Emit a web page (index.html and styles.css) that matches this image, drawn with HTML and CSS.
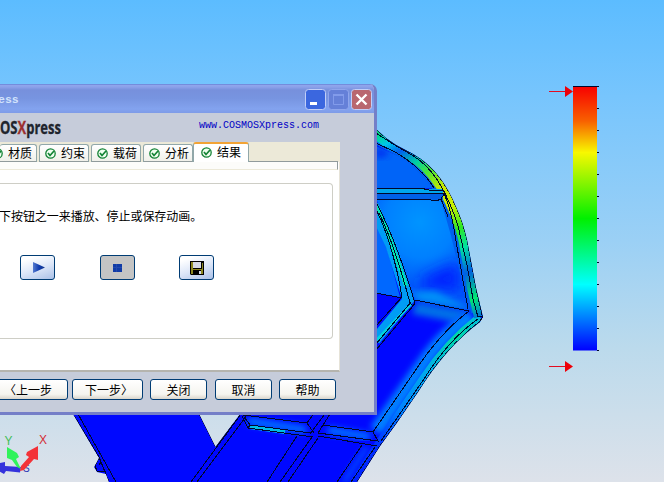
FILE: index.html
```html
<!DOCTYPE html>
<html lang="zh-CN">
<head>
<meta charset="utf-8">
<title>COSMOSXpress</title>
<link rel="stylesheet" href="styles.css">
</head>
<body>
<svg class="scene" width="664" height="482" viewBox="0 0 664 482">
  <defs>
    <linearGradient id="legend" x1="0" y1="0" x2="0" y2="1">
      <stop offset="0" stop-color="#f80000"/><stop offset=".13" stop-color="#f86000"/><stop offset=".25" stop-color="#f8f800"/><stop offset=".5" stop-color="#00f000"/><stop offset=".75" stop-color="#00ffff"/><stop offset="1" stop-color="#0000ff"/>
    </linearGradient>
    <linearGradient id="rim" gradientUnits="userSpaceOnUse" x1="376" y1="130" x2="480" y2="320">
      <stop offset="0" stop-color="#00e060"/><stop offset=".08" stop-color="#00c8e8"/><stop offset=".14" stop-color="#0060f0"/><stop offset=".22" stop-color="#00d0a0"/><stop offset=".29" stop-color="#50e830"/><stop offset=".38" stop-color="#c8e800"/><stop offset=".48" stop-color="#c8f000"/><stop offset=".58" stop-color="#30e820"/><stop offset=".67" stop-color="#00e0a0"/><stop offset=".78" stop-color="#0060e0"/><stop offset=".9" stop-color="#00e870"/><stop offset="1" stop-color="#0060f0"/>
    </linearGradient>
    <linearGradient id="lower" gradientUnits="userSpaceOnUse" x1="482" y1="317" x2="357" y2="482">
      <stop offset="0" stop-color="#00b8e0"/><stop offset=".15" stop-color="#00d8a8"/><stop offset=".35" stop-color="#00b0e8"/><stop offset=".6" stop-color="#0080ff"/><stop offset=".8" stop-color="#0030ff"/><stop offset="1" stop-color="#0020ff"/>
    </linearGradient>
    <radialGradient id="panel" gradientUnits="userSpaceOnUse" cx="420" cy="222" r="64">
      <stop offset="0" stop-color="#0094ff"/><stop offset=".55" stop-color="#0080ff"/><stop offset="1" stop-color="#0058fa"/>
    </radialGradient>
    <filter id="soft" x="-20%" y="-20%" width="140%" height="140%"><feGaussianBlur stdDeviation="3"/></filter>
    <filter id="haze" x="-50%" y="-50%" width="200%" height="200%"><feGaussianBlur stdDeviation="7"/></filter>
    <clipPath id="body"><path d="M370 124L377 130Q386 139 396 145L413 154Q429 163 440 178Q449 190 456 207Q463 222 467 240L476 288L483 317L480 322Q446 347 418 392L396 424L380 446L357 482H109L106 474L97 472L94 467L97 462L99 458L73 414H199L215.500 447L240 414H370Z"/></clipPath>
  </defs>
  <g clip-path="url(#body)">
    <rect class="solid" width="664" height="482"/>
    <path fill="#0064f8" d="M376 146L405 159L424 172L434 188L376 188Z"/>
    <path fill="#0030f0" filter="url(#soft)" d="M376 147L390 152L384 157L376 158Z"/>
    <path fill="url(#panel)" d="M376 198H443L453 215L462 260L470 310L415 300L398 260Z"/>
    <path fill="#0020ff" filter="url(#haze)" d="M422 278L457 262L460 291L422 288Z"/>
    <path fill="#0090f8" filter="url(#soft)" d="M410 292L435 291L463 305L467 309L420 301Z"/>
    <path fill="#0068ff" d="M376 218L388 252L400 297L376 293Z"/>
    <path fill="#0070e8" filter="url(#soft)" d="M416 302L469 311L454 322L412 314Z"/>
    <path class="spread" stroke="#0080ff" stroke-width="14" filter="url(#soft)" d="M472 316Q444 332 421 367L376 431"/>
    <path class="spread" stroke="url(#lower)" stroke-width="8" d="M480 317Q446 344 423 379L374 451L350 489"/>
    <path class="spread" stroke="#0060ee" stroke-width="10" d="M376 139L410 157L430 177L446 200L456 235L468 285L476 312"/>
    <path class="spread" stroke="url(#rim)" stroke-width="10" d="M373 132L390 145L411 156Q426 165 437 181Q447 194 453 209Q460 224 464 243L472 288L479 317"/>
    <path class="spread" stroke="#00a6ed" stroke-width="6" d="M376 191L443 192"/>
    <path class="spread" stroke="#0060e7" stroke-width="6" d="M376 196L443 197"/>
    <path class="spread" stroke="#009cf4" stroke-width="11" d="M372 205L391 245L408 300L375 340"/>
    <path class="spread" stroke="#00e7ae" stroke-width="4" d="M376 204L389 236L406 286"/>
    <path class="spread" stroke="#00d5de" stroke-width="3" d="M411 304L375 342"/>
    <path class="spread" stroke="#0078ff" stroke-width="7" filter="url(#soft)" d="M248 421L306 430M328 430L370 437"/>
    <path class="spread" stroke="#00bee7" stroke-width="4" d="M250 427L285 432"/>
    <path class="spread" stroke="#0050ff" stroke-width="5" filter="url(#soft)" d="M367 447L344 482"/>
    <g class="edges">
      <path d="M377 130Q386 139 396 145L413 154Q429 163 440 178Q449 190 456 207Q463 222 467 240L476 288L482.500 317L479.500 322Q446 347 418 392L396 424L380 446L357 482"/>
      <path d="M376 133L393 144L412 155Q427 164 438 181Q450 200 458 226L467 265L473 299L478 317"/>
      <path d="M376 143L395 152Q421 167 434 188"/>
      <path d="M376 188L420 188L429 190L443 190M376 193H443L445 196M376 199L431 200L436 201L441 199L444 194Q451 208 456 241L468 309M441 199L443 204L448 217"/>
      <path d="M376 209Q394 247 402 297L376 326M376 202Q396 240 415 303L413 306L376 350M379 213Q394 243 410 303L413 306M411 302L376 344"/>
      <path d="M376 293L402 298M415 300L469 311M478 319Q449 339 424 379L381 441M479.500 322L482.500 317L478 316M469 311Q440 333 415 371L373 432"/>
      <path d="M73 414L99 457L109 482M78 414L116 482M99 458L95 466L97 471L106 472M99 465L101 462M199 414L215.500 447M215.500 447L241 414M241 414L191 482M247 415L197 482"/>
      <path d="M242 416L248 428L313 437M245 418L250 425L310 433M250 425L248 428M243 415L307 423L314 433M307 423L313 415M330 414L318 433L378 441L373 432L323 425M318 436L377 446M312 437L280 482M318 438L288 482M297 436L267 482M362 445L337 482M375 447L351 482M325 414L310 434"/>
    </g>
  </g>
  <g>
    <path fill="url(#legend)" d="M573 86.500H597V350.500H573Z"/>
    <path class="edges" d="M573 86.500H599M597 108.500H599M597 130.500H599M597 152.500H599M597 174.500H599M597 196.500H599M597 218.500H599M597 240.500H599M597 262.500H599M597 284.500H599M597 306.500H599M597 328.500H599M597 350.500H599"/>
    <path class="pointer" d="M549 91.500H566M549 366.500H566"/>
    <path fill="#ee0008" d="M565 86L573 91.500L565 97ZM565 361L573 366.500L565 372Z"/>
  </g>
  <g>
    <text class="axis zaxis" x="23" y="472">S</text>
    <path fill="#3432dc" d="M21 467L20 472.500L6 471L4 474L-3 470L0 463L5 462V466Z"/>
    <path fill="#30f35b" d="M21 469L17 467L12 460L7 458L7 447L17 453L19 457L16 459Z"/>
    <path fill="#f33238" d="M20 471L24 470L34 459L38 460L38 446L27 452L26 455L29 457L21 466Z"/>
    <text class="axis yaxis" x="4.500" y="445">Y</text>
    <text class="axis xaxis" x="39" y="444">X</text>
  </g>
</svg>
<main class="window">
  <header class="titlebar">
    <span class="title">ess</span>
    <div class="controls">
      <svg width="21" height="21"><rect class="frame" fill="#3b67df" x=".5" y=".5" width="20" height="20" rx="3"/><path fill="#fff" d="M5 13H12V16H5Z"/></svg>
      <svg width="21" height="21"><rect class="frame dim" fill="#6580d8" x=".5" y=".5" width="20" height="20" rx="3"/><path fill="none" stroke="#829bea" d="M5.500 6V15.500H15.500V6M5 6.500H16M5 5.500H16"/></svg>
      <svg width="21" height="21"><rect class="frame" fill="#b9676f" x=".5" y=".5" width="20" height="20" rx="3"/><path stroke="#fff" stroke-width="2.400" d="M5.500 5.500L15.500 15.500M15.500 5.500L5.500 15.500"/></svg>
    </div>
  </header>
  <section class="brand">
    <svg class="logo" width="64" height="28"><text x="0" y="21" textLength="61" lengthAdjust="spacingAndGlyphs">OS<tspan fill="#9c302f">X</tspan>press</text></svg>
    <a class="link">www.COSMOSXpress.com</a>
  </section>
  <nav class="tabs">
    <div class="tab first"><svg class="check" viewBox="0 0 11 11"><circle cx="5.500" cy="5.500" r="4.700"/><path d="M3 5L5 7.500L9 3"/></svg>材质</div>
    <div class="tab"><svg class="check" viewBox="0 0 11 11"><circle cx="5.500" cy="5.500" r="4.700"/><path d="M3 5L5 7.500L9 3"/></svg>约束</div>
    <div class="tab"><svg class="check" viewBox="0 0 11 11"><circle cx="5.500" cy="5.500" r="4.700"/><path d="M3 5L5 7.500L9 3"/></svg>载荷</div>
    <div class="tab"><svg class="check" viewBox="0 0 11 11"><circle cx="5.500" cy="5.500" r="4.700"/><path d="M3 5L5 7.500L9 3"/></svg>分析</div>
    <div class="tab active"><svg class="check" viewBox="0 0 11 11"><circle cx="5.500" cy="5.500" r="4.700"/><path d="M3 5L5 7.500L9 3"/></svg>结果</div>
    <div class="edge"></div>
  </nav>
  <section class="page">
    <div class="pagetop"></div>
    <div class="group">
      <p class="hint">下按钮之一来播放、停止或保存动画。</p>
      <div class="player">
        <button class="tool" aria-label="播放"><svg width="31" height="21"><defs><linearGradient id="play"><stop offset="0" stop-color="#557bd0"/><stop offset=".5" stop-color="#103bae"/><stop offset="1" stop-color="#16398c"/></linearGradient></defs><path fill="url(#play)" d="M11 5L23 10.500L11 16Z"/></svg></button>
        <button class="tool pressed" aria-label="停止"><svg width="31" height="21"><path fill="#103ba7" d="M11 7H20V15H11Z"/><path stroke="#2349ae" d="M11 10.500H20M14.500 7V15"/></svg></button>
        <button class="tool" aria-label="保存"><svg width="31" height="21"><path d="M9 4H23V18H10L9 17Z"/><path fill="#8d8820" d="M10 5H12V12H21V6H22V17H20V13H12V17H10Z"/><path fill="#d5dae5" d="M12 5H20V11H12ZM18 14H20V17H18Z"/></svg></button>
      </div>
    </div>
  </section>
  <footer class="actions">
    <button class="prev">〈上一步</button><button class="next">下一步〉</button><button class="close">关闭</button><button class="cancel">取消</button><button class="help">帮助</button>
  </footer>
</main>
</body>
</html>
```
FILE: styles.css
```css
* { box-sizing: border-box; }
body {
  margin: 0;
  width: 664px;
  height: 482px;
  overflow: hidden;
  position: relative;
  background: linear-gradient(#5cbcff 0%, #77c5fd 20%, #9bd0f5 50%, #bbdaec 72%, #dde2ea 100%);
  font: 12px/16px "Noto Sans CJK SC", sans-serif;
  color: #000;
}
.scene { position: absolute; inset: 0; }
.solid { fill: #0008ff; }
.spread { fill: none; }
.edges { fill: none; stroke: #00082c; stroke-width: 1; shape-rendering: crispEdges; }
.pointer { stroke: #e30c20; }
.axis { font: 12px "Liberation Sans", sans-serif; }
.xaxis { fill: #d42d36; }
.yaxis { fill: #44bd58; }
.zaxis { fill: #3038b5; font-size: 10px; }
.window {
  position: absolute;
  left: 0;
  top: 84px;
  width: 377px;
  height: 331px;
  overflow: hidden;
  background: #c6ccda;
  border-right: 3px solid #747fc8;
  border-bottom: 3px solid #747fc8;
  border-top-right-radius: 7px;
}
.titlebar {
  display: flex;
  justify-content: space-between;
  height: 29px;
  margin-right: -3px;
  padding: 5px 5px 0 0;
  background: linear-gradient(#5872cb 0, #91a6ed 1px, #8ba1e9 3px, #7790dc 6px, #7794e0 14px, #83a3ef 25px, #7e9be7 29px);
}
.title {
  margin-left: -2px;
  padding-top: 3px;
  font: bold 11.5px/16px "Liberation Mono", monospace;
  color: #d2e3fc;
}
.controls { display: flex; gap: 2px; }
.frame { stroke: #c1cef8; }
.dim { stroke: #90a6ec; }
.brand { display: flex; height: 29px; }
.logo { flex: none; }
.logo text { font: bold 18px "Open Sans", "Liberation Sans", sans-serif; fill: #20242d; stroke: #20242d; stroke-width: .3; }
.logo tspan { stroke: #9c302f; }
.link {
  margin: 4px 0 0 135px;
  font: 10px/18px "Liberation Mono", monospace;
  color: #0000c5;
}
.tabs {
  display: flex;
  align-items: flex-end;
  gap: 2px;
  width: 340px;
  height: 20px;
  background: #ece9d8;
}
.tab {
  display: flex;
  flex: none;
  align-items: center;
  gap: 5px;
  width: 50px;
  height: 18px;
  padding-left: 5px;
  border: 1px solid #91a7a9;
  border-bottom-color: #919b9c;
  border-radius: 3px 3px 0 0;
  background: linear-gradient(#fff, #f0f0ea);
  white-space: nowrap;
  line-height: 16px;
}
.first { width: 37px; padding-left: 0; border-left: 0; }
.first .check { margin-left: -8px; }
.active {
  width: 56px;
  height: 20px;
  margin-left: -2px;
  padding: 0 0 2px 7px;
  border-top: 2px solid #f2a335;
  border-bottom: 0;
  background: #fff;
}
.edge { width: 89px; height: 1px; margin-left: -2px; background: #919b9c; }
.check { flex: none; width: 11px; height: 11px; fill: #f0fff0; stroke: #148335; stroke-width: 1.3; }
.check path { fill: none; stroke-width: 1.7; }
.page {
  width: 340px;
  height: 210px;
  padding-right: 7px;
  background: #fff;
  border-right: 1px solid #e6e3d8;
  border-bottom: 2px solid #b5b4ae;
}
.pagetop {
  width: 338px;
  height: 8px;
  background: #fcfcfa;
  border-right: 1px solid #919b9c;
  border-bottom: 1px solid #ece9d8;
}
.group {
  width: 333px;
  height: 156px;
  margin-top: 13px;
  border: 1px solid #cecec6;
  border-left: 0;
  border-radius: 0 4px 4px 0;
}
.hint { margin: 24px 0 0 -1px; line-height: 16px; letter-spacing: -.05px; }
.player { display: flex; padding: 31px 0 0 20px; }
button {
  padding: 0;
  border: 1px solid #003c74;
  border-radius: 3px;
  background: linear-gradient(#fff, #f5f4ef 75%, #dad5cc);
  font: inherit;
  color: #000;
  white-space: nowrap;
}
.tool {
  display: grid;
  place-items: center;
  width: 35px;
  height: 25px;
  background: linear-gradient(160deg, #fff 15%, #dce6f8 55%, #aac0e7);
}
.tool + .tool { margin-left: 45px; }
.pressed { background: #c4c4c4; }
.tool.pressed + .tool { margin-left: 44px; }
.actions { display: flex; padding-top: 7px; }
.actions button { height: 21px; line-height: 18px; }
.actions .prev { width: 72px; margin-left: -4px; padding-right: 8px; }
.actions .next { width: 71px; margin-left: 4px; padding-left: 3px; }
.actions .close { width: 57px; margin-left: 7px; }
.actions .cancel { width: 57px; margin-left: 8px; }
.actions .help { width: 57px; margin-left: 7px; }
```
